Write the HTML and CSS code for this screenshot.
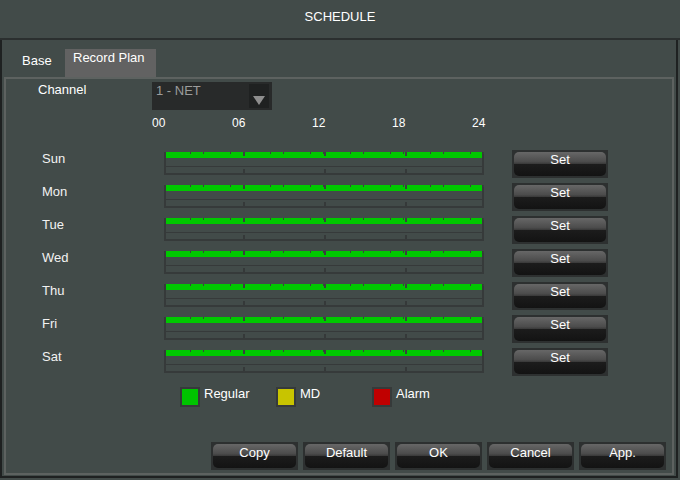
FILE: index.html
```html
<!DOCTYPE html>
<html>
<head>
<meta charset="utf-8">
<title>SCHEDULE</title>
<link rel="stylesheet" href="styles.css">
</head>
<body>
<div class="win">
  <div class="title">SCHEDULE</div>
  <div class="main">
    <div class="tabs">
      <span class="tab tab-base">Base</span>
      <span class="tab tab-active">Record Plan</span>
    </div>
    <div class="panel">
      <div class="chan-row">
        <span class="chan-label">Channel</span>
        <div class="select"><span class="select-text">1 - NET</span><span class="select-arrow"><span class="tri"></span></span></div>
      </div>
      <div class="hours"><span>00</span><span>06</span><span>12</span><span>18</span><span>24</span></div>
      <div class="days">
        <div class="day"><span class="dname">Sun</span><div class="bar"></div><div class="btn btn-set"><span>Set</span></div></div>
        <div class="day"><span class="dname">Mon</span><div class="bar"></div><div class="btn btn-set"><span>Set</span></div></div>
        <div class="day"><span class="dname">Tue</span><div class="bar"></div><div class="btn btn-set"><span>Set</span></div></div>
        <div class="day"><span class="dname">Wed</span><div class="bar"></div><div class="btn btn-set"><span>Set</span></div></div>
        <div class="day"><span class="dname">Thu</span><div class="bar"></div><div class="btn btn-set"><span>Set</span></div></div>
        <div class="day"><span class="dname">Fri</span><div class="bar"></div><div class="btn btn-set"><span>Set</span></div></div>
        <div class="day"><span class="dname">Sat</span><div class="bar"></div><div class="btn btn-set"><span>Set</span></div></div>
      </div>
      <div class="legend">
        <div class="leg"><span class="sq sq-green"></span><span class="leg-text">Regular</span></div>
        <div class="leg"><span class="sq sq-yellow"></span><span class="leg-text">MD</span></div>
        <div class="leg"><span class="sq sq-red"></span><span class="leg-text">Alarm</span></div>
      </div>
      <div class="actions">
        <div class="btn btn-act"><span>Copy</span></div>
        <div class="btn btn-act"><span>Default</span></div>
        <div class="btn btn-act"><span>OK</span></div>
        <div class="btn btn-act"><span>Cancel</span></div>
        <div class="btn btn-act"><span>App.</span></div>
      </div>
    </div>
  </div>
</div>
</body>
</html>
```
FILE: styles.css
```css
html, body {
  margin: 0;
  padding: 0;
  background: #424b49;
  overflow: hidden;
}
body {
  font-family: "Liberation Sans", Arial, sans-serif;
  font-size: 13px;
  color: #ffffff;
}
.win {
  width: 680px;
  height: 480px;
  background: #424b49;
}
.title {
  height: 38px;
  line-height: 34px;
  text-align: center;
  border-bottom: 2px solid #2b2f2f;
}
.main {
  box-sizing: border-box;
  width: 678px;
  height: 438px;
  border-left: 2px solid #1e2121;
  border-right: 2px solid #1e2121;
  border-bottom: 2px solid #1e2121;
}
.tabs {
  display: flex;
  padding-top: 9px;
  padding-left: 12px;
  height: 28px;
}
.tab {
  display: block;
  box-sizing: border-box;
  height: 28px;
}
.tab-base {
  width: 51px;
  padding-left: 8px;
  padding-top: 4px;
  line-height: 16px;
}
.tab-active {
  width: 91px;
  background: #626262;
  padding-left: 8px;
  padding-top: 1px;
  line-height: 16px;
}
.panel {
  box-sizing: border-box;
  width: 670px;
  height: 398px;
  margin-left: 2px;
  border: 2px solid #5d6260;
}
.chan-row {
  display: flex;
  align-items: flex-start;
  margin-top: 3px;
  height: 28px;
}
.chan-label {
  width: 114px;
  padding-left: 32px;
  line-height: 14px;
  padding-top: 1px;
}
.select {
  position: relative;
  box-sizing: border-box;
  width: 120px;
  height: 28px;
  background: #282a2a;
  padding-left: 4px;
}
.select-text {
  display: block;
  color: #9c9c9c;
  line-height: 16px;
  padding-top: 1px;
}
.select-arrow {
  position: absolute;
  right: 3px;
  top: 2px;
  width: 20px;
  height: 24px;
  background: #1f2121;
  display: flex;
  justify-content: center;
  align-items: flex-start;
}
.tri {
  margin-top: 12px;
  width: 0;
  height: 0;
  border-left: 6px solid transparent;
  border-right: 6px solid transparent;
  border-top: 9px solid #8e8e8e;
}
.hours {
  display: flex;
  margin-top: 6px;
  padding-left: 146px;
  height: 14px;
  line-height: 14px;
  font-size: 12px;
}
.hours span {
  width: 80px;
}
.days {
  margin-top: 20px;
}
.day {
  display: flex;
  align-items: flex-start;
  height: 33px;
}
.dname {
  box-sizing: border-box;
  width: 158px;
  padding-left: 36px;
  padding-top: 1px;
  line-height: 16px;
  color: #f2f2f2;
}
.bar {
  width: 320px;
  height: 23px;
  margin-top: 2px;
  background:
    repeating-linear-gradient(90deg, transparent 0 79px, #3b3f3f 79px 81px) 0 0 / 100% 4px no-repeat,
    repeating-linear-gradient(90deg, transparent 0 12.6px, #3b3f3f 12.6px 13.333px) 0 0 / 100% 2px no-repeat,
    repeating-linear-gradient(90deg, transparent 0 79px, #353939 79px 81px) 0 17px / 100% 4px no-repeat,
    linear-gradient(#00c800, #00c800) 2px 0 / 316px 6px no-repeat,
    linear-gradient(#363a3a, #363a3a) 0 14px / 100% 1px no-repeat,
    linear-gradient(#363a3a, #363a3a) 0 21px / 100% 2px no-repeat,
    linear-gradient(#363a3a, #363a3a) 0 0 / 2px 100% no-repeat,
    linear-gradient(#363a3a, #363a3a) 100% 0 / 2px 100% no-repeat;
}
.btn {
  box-sizing: border-box;
  height: 28px;
  padding: 2px;
  background: #2d3030;
}
.btn span {
  display: block;
  height: 100%;
  border-radius: 5px;
  text-align: center;
  line-height: 16px;
  color: #ffffff;
  background: linear-gradient(to bottom, #676767 0%, #4c4c4c 40%, #3c3c3c 48%, #1c1c1c 50%, #131313 100%);
}
.btn-set {
  width: 96px;
  margin-left: 28px;
}
.legend {
  display: flex;
  margin-top: 6px;
  padding-left: 174px;
  height: 20px;
}
.leg {
  display: flex;
  align-items: flex-start;
  width: 96px;
}
.sq {
  box-sizing: border-box;
  width: 20px;
  height: 20px;
  border: 2px solid #363a3a;
  margin-right: 4px;
}
.sq-green { background: #00c400; }
.sq-yellow { background: #c8c400; }
.sq-red { background: #c00000; }
.leg-text {
  line-height: 14px;
}
.actions {
  display: flex;
  gap: 5px;
  margin-top: 35px;
  padding-left: 205px;
}
.btn-act {
  width: 87px;
}
.btn-act span {
  line-height: 17px;
}
```
